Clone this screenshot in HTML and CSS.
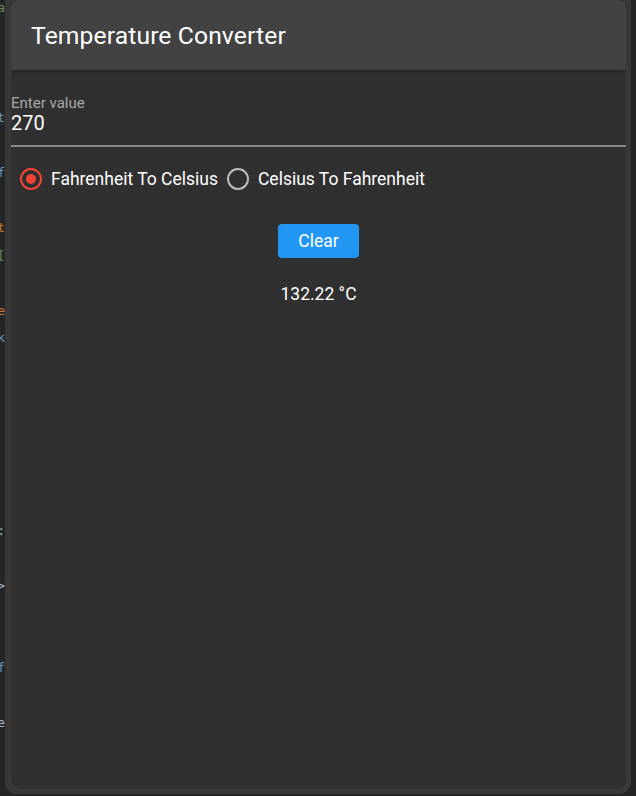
FILE: index.html
```html
<!DOCTYPE html>
<html>
<head>
<meta charset="utf-8">
<link rel="stylesheet" href="styles.css">
</head>
<body>
<div class="backdrop">
  <div class="editor">
    <div class="code-line"><span class="c-green">a</span></div>
    <div class="code-line"></div>
    <div class="code-line"></div>
    <div class="code-line"></div>
    <div class="code-line"><span class="c-orange">n</span><span class="c-blue">t</span></div>
    <div class="code-line"></div>
    <div class="code-line"><span class="c-blue">f</span></div>
    <div class="code-line"></div>
    <div class="code-line"><span class="c-orange">t</span></div>
    <div class="code-line"><span class="c-green">[</span></div>
    <div class="code-line"></div>
    <div class="code-line"><span class="c-orange">e</span></div>
    <div class="code-line"><span class="c-blue">k</span></div>
    <div class="code-line"></div>
    <div class="code-line"></div>
    <div class="code-line"></div>
    <div class="code-line"></div>
    <div class="code-line"></div>
    <div class="code-line"></div>
    <div class="code-line"><span class="c-grey">1:</span></div>
    <div class="code-line"></div>
    <div class="code-line"><span class="c-grey">&gt;</span></div>
    <div class="code-line"></div>
    <div class="code-line"></div>
    <div class="code-line"><span class="c-orange">n</span><span class="c-blue">f</span></div>
    <div class="code-line"></div>
    <div class="code-line"><span class="c-grey">e</span></div>
  </div>
  <div class="window">
    <div class="app">
      <header class="appbar"><h1 class="title">Temperature Converter</h1></header>
      <main class="content">
        <div class="field">
          <label class="field-label">Enter value</label>
          <div class="field-value">270</div>
        </div>
        <div class="radios">
          <label class="radio">
            <span class="radio-circle checked"><span class="radio-dot"></span></span>
            <span class="radio-text">Fahrenheit To Celsius</span>
          </label>
          <label class="radio">
            <span class="radio-circle"></span>
            <span class="radio-text">Celsius To Fahrenheit</span>
          </label>
        </div>
        <div class="actions"><button class="btn">Clear</button></div>
        <div class="result">132.22 °C</div>
      </main>
    </div>
  </div>
</div>
</body>
</html>
```

FILE: styles.css
```css
html, body {
  margin: 0;
  padding: 0;
  width: 636px;
  height: 796px;
  overflow: hidden;
  background: #242526;
  font-family: Roboto, "Noto Sans", sans-serif;
}
.backdrop {
  display: flex;
  height: 796px;
}
.editor {
  width: 5px;
  flex: none;
  overflow: hidden;
  display: flex;
  flex-direction: column;
  margin-top: -6px;
  font-family: "DejaVu Sans Mono", monospace;
  font-size: 13px;
}
.code-line {
  height: 27.5px;
  line-height: 27.5px;
  display: flex;
  justify-content: flex-end;
  white-space: nowrap;
  flex: none;
}
.c-green { color: #6a8759; }
.c-orange { color: #cc7832; }
.c-blue { color: #6897bb; }
.c-grey { color: #a9b7c6; }
.window {
  width: 626px;
  height: 794px;
  flex: none;
  background: #383838;
  border-radius: 0 0 12px 12px;
  padding: 0 5px 5px 6px;
  box-sizing: border-box;
  display: flex;
}
.app {
  flex: 1;
  background: #303030;
  border-radius: 8px 8px 10px 10px;
  overflow: hidden;
  display: flex;
  flex-direction: column;
}
.appbar {
  height: 70px;
  flex: none;
  background: #424242;
  display: flex;
  align-items: center;
  padding-left: 20px;
  box-shadow: 0 2px 4px rgba(0,0,0,0.25);
  position: relative;
}
.title {
  margin: 0;
  color: #ffffff;
  font-size: 24.7px;
  font-weight: 400;
  letter-spacing: 0.1px;
}
.content {
  display: flex;
  flex-direction: column;
  padding-top: 26px;
}
.field {
  display: flex;
  flex-direction: column;
  border-bottom: 2px solid #8a8a8a;
  padding-bottom: 10px;
}
.field-label {
  color: #a9a9a9;
  font-size: 15px;
  line-height: 15px;
}
.field-value {
  color: #ffffff;
  font-size: 20px;
  line-height: 24px;
}
.radios {
  display: flex;
  gap: 9px;
  padding: 20px 0 0 9px;
  height: 24px;
  align-items: center;
}
.radio {
  display: flex;
  align-items: center;
  gap: 9px;
  color: #ffffff;
  font-size: 17.5px;
}
.radio-circle {
  width: 18px;
  height: 18px;
  border: 2px solid #bdbdbd;
  border-radius: 50%;
  display: flex;
  align-items: center;
  justify-content: center;
}
.radio-circle.checked {
  border-color: #f44336;
}
.radio-dot {
  width: 10px;
  height: 10px;
  border-radius: 50%;
  background: #f44336;
}
.actions {
  display: flex;
  justify-content: center;
  padding-top: 33px;
}
.btn {
  width: 81px;
  height: 34px;
  background: #2196f3;
  color: #ffffff;
  border: none;
  border-radius: 4px;
  font-family: Roboto, "Noto Sans", sans-serif;
  font-size: 17.5px;
  padding: 0;
}
.result {
  text-align: center;
  color: #ffffff;
  font-size: 17.5px;
  line-height: 21px;
  padding-top: 26px;
}
```
